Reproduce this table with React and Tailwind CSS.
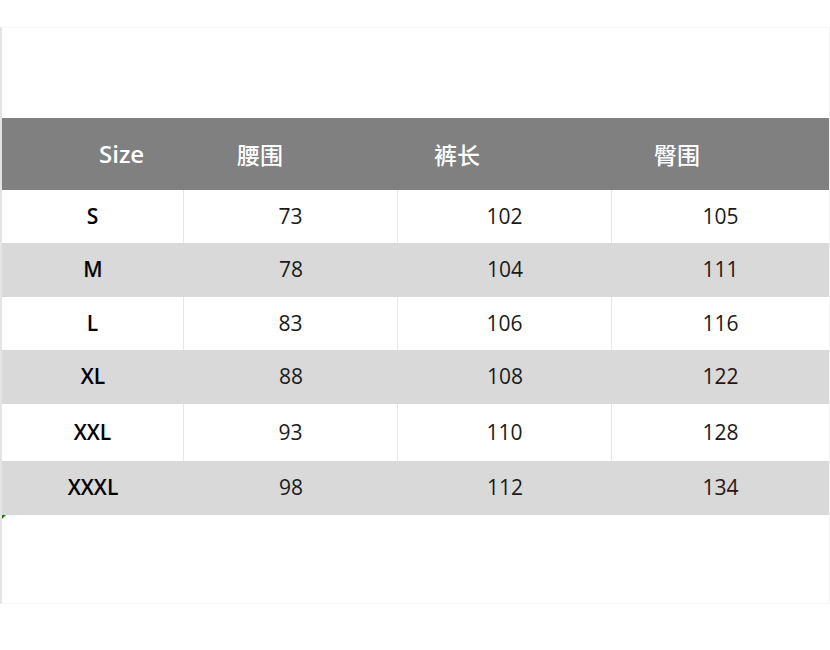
import React from "react";

const rows = [
  ["S", "73", "102", "105", "h-[53px]", false],
  ["M", "78", "104", "111", "h-[54px]", true],
  ["L", "83", "106", "116", "h-[53px]", false],
  ["XL", "88", "108", "122", "h-[54px]", true],
  ["XXL", "93", "110", "128", "h-[57px]", false],
  ["XXXL", "98", "112", "134", "h-[54px]", true],
];

export default function App() {
  return (
    <div
      className="w-[830px] h-[650px] bg-white pt-[27px]"
      style={{ fontFamily: '"Open Sans", "Noto Sans CJK SC", sans-serif' }}
    >
      <div className="w-[830px] h-[577px] border-t border-r border-b border-t-[#f7f7f7] border-r-[#f3f3f3] border-b-[#f7f7f7] border-l-2 border-l-[#e4e4e4] flex flex-col">
        <div className="h-[90px]" />
        <div className="h-[72px] bg-[#808080] text-white text-[23px] flex items-center font-medium">
          <span className="ml-[97px] w-[138px] text-[24px] font-semibold">Size</span>
          <span className="w-[197px]" style={{ fontFamily: '"Noto Sans CJK SC", sans-serif' }}>腰围</span>
          <span className="w-[220px]" style={{ fontFamily: '"Noto Sans CJK SC", sans-serif' }}>裤长</span>
          <span style={{ fontFamily: '"Noto Sans CJK SC", sans-serif' }}>臀围</span>
        </div>
        {rows.map(([s, a, b, c, h, gray]) => (
          <div
            key={s}
            className={`${h} flex items-stretch w-[827px] ${gray ? "bg-[#d9d9d9]" : "bg-white"}`}
          >
            <div className={`w-[182px] flex items-center justify-center font-semibold text-[21px] text-black ${gray ? "" : "border-r border-[#e6e6e6]"}`}>
              {s}
            </div>
            <div className={`w-[214px] flex items-center justify-center text-[21px] text-[#1a1a1a] ${gray ? "" : "border-r border-[#e6e6e6]"}`}>
              {a}
            </div>
            <div className={`w-[214px] flex items-center justify-center text-[21px] text-[#1a1a1a] ${gray ? "" : "border-r border-[#e6e6e6]"}`}>
              {b}
            </div>
            <div className={`flex-1 flex items-center justify-center text-[21px] ${gray ? "text-[#2a1414]" : "text-[#1a1a1a]"}`}>
              {c}
            </div>
          </div>
        ))}
        <div className="flex-1">
          <svg width="4" height="4" className="block">
            <polygon points="0,0 4,0 0,4" fill="#1c7a1c" />
          </svg>
        </div>
      </div>
    </div>
  );
}
